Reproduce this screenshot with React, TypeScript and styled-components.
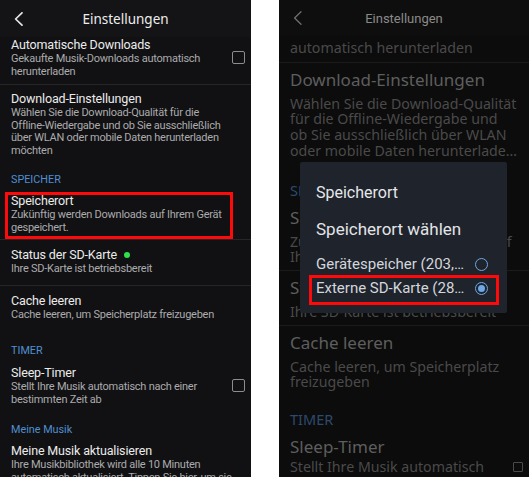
import React from "react";
import styled, { createGlobalStyle } from "styled-components";

const Global = createGlobalStyle`
  html, body { margin: 0; padding: 0; background: #ffffff; }
  * { box-sizing: border-box; }
`;

const Page = styled.div`
  display: flex;
  width: 529px;
  height: 477px;
  background: #ffffff;
  overflow: hidden;
`;

/* ---------- Left phone (Samsung style) ---------- */

const LeftPhone = styled.div`
  width: 251px;
  height: 477px;
  flex: none;
  background: #111113;
  overflow: hidden;
  font-family: Roboto, "Noto Sans", sans-serif;
`;

const Gutter = styled.div`
  width: 28px;
  flex: none;
  background: #ffffff;
`;

const Header = styled.div<{ $bg: string; $h: number }>`
  height: ${(p) => p.$h}px;
  background: ${(p) => p.$bg};
  display: grid;
  grid-template-columns: 40px 1fr 40px;
  align-items: center;
`;

const Back = styled.div`
  display: flex;
  align-items: center;
  padding-left: 14px;
`;

const HeaderTitle = styled.div<{ $color: string; $size: number; $font: string }>`
  text-align: center;
  color: ${(p) => p.$color};
  font-size: ${(p) => p.$size}px;
  font-family: ${(p) => p.$font};
  white-space: nowrap;
`;

const LRow = styled.div<{ $pt?: number; $pb?: number; $marked?: boolean }>`
  display: flex;
  align-items: center;
  padding: ${(p) => p.$pt ?? 7}px 6px ${(p) => p.$pb ?? 9}px 11px;
  ${(p) =>
    p.$marked
      ? `margin: 0 18px 0 5px; padding-left: 6px; box-shadow: inset 0 0 0 3px #ff0a0a;`
      : ""}
`;

const LText = styled.div`
  flex: 1;
  min-width: 0;
`;

const LTitle = styled.div`
  color: #ebebeb;
  font-size: 12.5px;
  letter-spacing: -0.15px;
  line-height: 16px;
  white-space: nowrap;
  display: flex;
  align-items: center;
  gap: 7px;
`;

const LSub = styled.div`
  color: #ababad;
  font-size: 11px;
  letter-spacing: -0.25px;
  line-height: 12.5px;
  white-space: pre;
`;

const LDivider = styled.div`
  height: 1px;
  background: #262628;
`;

const LLabel = styled.div<{ $pt: number }>`
  padding: ${(p) => p.$pt}px 11px 5px;
  color: #4f8fd0;
  font-size: 10.8px;
  line-height: 14px;
`;

const Box = styled.div`
  width: 13px;
  height: 13px;
  flex: none;
  border: 1.6px solid #8d8d90;
  border-radius: 2px;
  margin-left: 6px;
`;

const Dot = styled.span`
  width: 6px;
  height: 6px;
  border-radius: 50%;
  background: #2ee04a;
  display: inline-block;
`;

/* ---------- Right phone (dimmed, with dialog) ---------- */

const RightPhone = styled.div`
  position: relative;
  width: 250px;
  height: 477px;
  flex: none;
  background: #0c0c0c;
  overflow: hidden;
  font-family: "Noto Sans", "Open Sans", sans-serif;
`;

const RRow = styled.div<{ $pt?: number; $pb?: number }>`
  display: flex;
  align-items: center;
  padding: ${(p) => p.$pt ?? 6}px 6px ${(p) => p.$pb ?? 5}px 11px;
`;

const RText = styled.div`
  flex: 1;
  min-width: 0;
`;

const RTitle = styled.div`
  color: #5e5e5e;
  font-size: 17px;
  line-height: 22px;
  white-space: nowrap;
`;

const RSub = styled.div<{ $mt?: number }>`
  margin-top: ${(p) => p.$mt ?? 5}px;
  color: #4a4a4a;
  font-size: 14.2px;
  line-height: 15.7px;
  white-space: pre;
`;

const RDivider = styled.div`
  height: 1px;
  background: #1b1b1b;
`;

const RLabel = styled.div<{ $pt: number }>`
  padding: ${(p) => p.$pt}px 11px 3px;
  color: #2c4a6c;
  font-size: 14.5px;
  line-height: 16px;
`;

const SmallBox = styled.div`
  width: 10px;
  height: 10px;
  flex: none;
  align-self: flex-end;
  margin: 0 0 3px 4px;
  border: 1.3px solid #4a4a4a;
  border-radius: 1px;
`;

const Dialog = styled.div`
  position: absolute;
  left: 21px;
  top: 162px;
  width: 207px;
  height: 151px;
  background: #1e232c;
  border-radius: 2px;
  padding: 21px 0 0;
  font-family: Roboto, "Noto Sans", sans-serif;
`;

const DTitle = styled.div`
  padding: 0 16px;
  color: #e6e7ea;
  font-size: 16px;
  line-height: 20px;
`;

const DHeading = styled.div`
  padding: 0 16px;
  margin-top: 15px;
  color: #e3e4e7;
  font-size: 17px;
  line-height: 22px;
`;

const Options = styled.div`
  margin-top: 12px;
  display: flex;
  flex-direction: column;
`;

const Option = styled.div<{ $marked?: boolean }>`
  display: flex;
  align-items: center;
  justify-content: space-between;
  height: 24px;
  margin: 0 11px 0 12px;
  padding: 0 8px 0 4px;
  color: #d3d6db;
  font-size: 15px;
  white-space: nowrap;
  ${(p) =>
    p.$marked ? `outline: 3px solid #ff0a0a; margin-top: 2px; padding-bottom: 4px;` : ""}
`;

const Radio = styled.span<{ $on?: boolean }>`
  width: 13px;
  height: 13px;
  flex: none;
  border-radius: 50%;
  border: 1.6px solid #6ea8e6;
  display: flex;
  align-items: center;
  justify-content: center;
  &::after {
    content: "";
    width: 7px;
    height: 7px;
    border-radius: 50%;
    background: ${(p) => (p.$on ? "#6ea8e6" : "transparent")};
  }
`;

const Chevron = ({ color, w = 1.7 }: { color: string; w?: number }) => (
  <svg width="10" height="14" viewBox="0 0 10 14">
    <path d="M8 0.8 L1.6 7 L8 13.2" fill="none" stroke={color} strokeWidth={w} strokeLinecap="round" strokeLinejoin="round" />
  </svg>
);

export default function App() {
  return (
    <>
      <Global />
      <Page>
        <LeftPhone>
          <Header $bg="#141417" $h={37}>
            <Back>
              <Chevron color="#e6e6e6" />
            </Back>
            <HeaderTitle $color="#ededed" $size={13.5} $font={`"Noto Sans", sans-serif`}>
              Einstellungen
            </HeaderTitle>
            <span />
          </Header>
          <LRow $pt={0} $pb={6}>
            <LText>
              <LTitle>Automatische Downloads</LTitle>
              <LSub>{"Gekaufte Musik-Downloads automatisch\nherunterladen"}</LSub>
            </LText>
            <Box />
          </LRow>
          <LDivider />
          <LRow $pt={6}>
            <LText>
              <LTitle>Download-Einstellungen</LTitle>
              <LSub>
                {"Wählen Sie die Download-Qualität für die\nOffline-Wiedergabe und ob Sie ausschließlich\nüber WLAN oder mobile Daten herunterladen\nmöchten"}
              </LSub>
            </LText>
          </LRow>
          <LLabel $pt={7}>SPEICHER</LLabel>
          <LRow $marked $pt={1} $pb={5}>
            <LText>
              <LTitle>Speicherort</LTitle>
              <LSub>{"Zukünftig werden Downloads auf Ihrem Gerät\ngespeichert."}</LSub>
            </LText>
          </LRow>
          <LDivider />
          <LRow>
            <LText>
              <LTitle>
                Status der SD-Karte <Dot />
              </LTitle>
              <LSub>Ihre SD-Karte ist betriebsbereit</LSub>
            </LText>
          </LRow>
          <LDivider />
          <LRow>
            <LText>
              <LTitle>Cache leeren</LTitle>
              <LSub>Cache leeren, um Speicherplatz freizugeben</LSub>
            </LText>
          </LRow>
          <LLabel $pt={14}>TIMER</LLabel>
          <LRow $pt={2}>
            <LText>
              <LTitle>Sleep-Timer</LTitle>
              <LSub>{"Stellt Ihre Musik automatisch nach einer\nbestimmten Zeit ab"}</LSub>
            </LText>
            <Box />
          </LRow>
          <LLabel $pt={8}>Meine Musik</LLabel>
          <LRow $pt={1}>
            <LText>
              <LTitle>Meine Musik aktualisieren</LTitle>
              <LSub>
                {"Ihre Musikbibliothek wird alle 10 Minuten\nautomatisch aktualisiert. Tippen Sie hier, um sie"}
              </LSub>
            </LText>
          </LRow>
        </LeftPhone>

        <Gutter />

        <RightPhone>
          <Header $bg="#0e0e0e" $h={36}>
            <Back>
              <Chevron color="#6f6f6f" w={1.3} />
            </Back>
            <HeaderTitle $color="#8a8a8a" $size={13} $font={`Roboto, sans-serif`}>
              Einstellungen
            </HeaderTitle>
            <span />
          </Header>
          <RRow $pt={4} $pb={6}>
            <RText>
              <RSub $mt={0}>automatisch herunterladen</RSub>
            </RText>
          </RRow>
          <RDivider />
          <RRow>
            <RText>
              <RTitle>Download-Einstellungen</RTitle>
              <RSub>
                {"Wählen Sie die Download-Qualität\nfür die Offline-Wiedergabe und\nob Sie ausschließlich über WLAN\noder mobile Daten herunterlade…"}
              </RSub>
            </RText>
          </RRow>
          <RLabel $pt={18}>SPEICHER</RLabel>
          <RRow>
            <RText>
              <RTitle>Speicherort</RTitle>
              <RSub>{"Zukünftig werden Downloads auf\nIhrem Gerät gespeichert."}</RSub>
            </RText>
          </RRow>
          <RDivider />
          <RRow>
            <RText>
              <RTitle>Status der SD-Karte</RTitle>
              <RSub>Ihre SD-Karte ist betriebsbereit</RSub>
            </RText>
          </RRow>
          <RDivider />
          <RRow>
            <RText>
              <RTitle>Cache leeren</RTitle>
              <RSub>{"Cache leeren, um Speicherplatz\nfreizugeben"}</RSub>
            </RText>
          </RRow>
          <RLabel $pt={16}>TIMER</RLabel>
          <RRow>
            <RText>
              <RTitle>Sleep-Timer</RTitle>
              <RSub $mt={1}>{"Stellt Ihre Musik automatisch"}</RSub>
            </RText>
            <SmallBox />
          </RRow>

          <Dialog>
            <DTitle>Speicherort</DTitle>
            <DHeading>Speicherort wählen</DHeading>
            <Options>
              <Option>
                <span>Gerätespeicher (203,…</span>
                <Radio />
              </Option>
              <Option $marked>
                <span>Externe SD-Karte (28…</span>
                <Radio $on />
              </Option>
            </Options>
          </Dialog>
        </RightPhone>
      </Page>
    </>
  );
}
